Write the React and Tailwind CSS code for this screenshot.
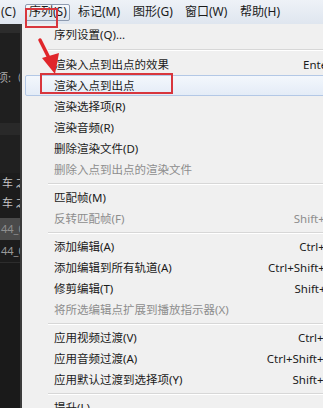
import React from "react";

const font = {
  fontFamily: "'Noto Sans', 'Noto Sans CJK SC', sans-serif",
};

const items = [
  { label: "序列设置(Q)..." },
  { sep: "h-[9px]" },
  { label: "渲染入点到出点的效果", key: "Enter" },
  { label: "渲染入点到出点", active: true },
  { label: "渲染选择项(R)" },
  { label: "渲染音频(R)" },
  { label: "删除渲染文件(D)" },
  { label: "删除入点到出点的渲染文件", off: true },
  { sep: "h-[7px]" },
  { label: "匹配帧(M)", key: "F" },
  { label: "反转匹配帧(F)", key: "Shift+R", off: true },
  { sep: "h-[7px]" },
  { label: "添加编辑(A)", key: "Ctrl+K" },
  { label: "添加编辑到所有轨道(A)", key: "Ctrl+Shift+K" },
  { label: "修剪编辑(T)", key: "Shift+T" },
  { label: "将所选编辑点扩展到播放指示器(X)", off: true },
  { sep: "h-[7px]" },
  { label: "应用视频过渡(V)", key: "Ctrl+D" },
  { label: "应用音频过渡(A)", key: "Ctrl+Shift+D" },
  { label: "应用默认过渡到选择项(Y)", key: "Shift+D" },
  { sep: "h-[7px]" },
  { label: "提升(L)", key: ";" },
];

function MenuRow({ item }) {
  if (item.sep) {
    return (
      <div className={`${item.sep} flex flex-col justify-center pl-[26px]`}>
        <div className="h-px bg-[#d7d7d7]" />
        <div className="h-px bg-white" />
      </div>
    );
  }
  const color = item.off ? "text-[#8d8d8d]" : "text-[#1b1b1b]";
  return (
    <div className="relative h-[21px]">
      {item.active && (
        <div className="absolute left-[3px] right-0 top-0 bottom-0 border border-[#b3c8e6] bg-gradient-to-b from-[#f3f7fc] to-[#e4ecf7] rounded-[2px]" />
      )}
      <div className={`relative flex h-full items-center pl-[32px] pr-[10px] ${color}`}>
        <span className="flex-1 whitespace-nowrap">{item.label}</span>
        {item.key && <span className="whitespace-nowrap">{item.key}</span>}
      </div>
      {item.active && (
        <div className="absolute left-[18px] top-[-2px] w-[133px] h-[21px] border-2 border-[#d8363d]" />
      )}
    </div>
  );
}

function DarkPanel() {
  return (
    <div className="flex w-[22px] shrink-0 text-[11px] text-[#a9a9a9] overflow-hidden">
      <div className="flex w-[20px] flex-col bg-[#1c1c1c]">
        <div className="h-[9px] shrink-0 bg-[#2c2c2c]" />
        <div className="h-[90px] shrink-0 bg-[#1f1f1f] pt-[37px]">
          <div className="ml-[-3px] whitespace-nowrap leading-[16px]">项:（</div>
        </div>
        <div className="h-[12px] shrink-0 bg-[#292929]" />
        <div className="h-[38px] shrink-0 bg-[#202020]" />
        <div className="h-[20px] shrink-0 flex items-center whitespace-nowrap pl-[2px] text-[#c4c4c4]">车 之</div>
        <div className="h-[20px] shrink-0 flex items-center whitespace-nowrap pl-[2px] text-[#c4c4c4]">车 之</div>
        <div className="h-[5px] shrink-0" />
        <div className="h-[22px] shrink-0 flex items-center bg-[#4a4a4a] whitespace-nowrap pl-[1px] text-[#8f8f8f]">44_0</div>
        <div className="h-[22px] shrink-0 flex items-center whitespace-nowrap pl-[1px] text-[#9a9a9a]">44_0</div>
        <div className="h-px shrink-0 bg-[#2d2d2d]" />
        <div className="flex-1 bg-[#1a1a1a]" />
      </div>
      <div className="w-[2px] bg-[#3b3b3b]" />
    </div>
  );
}

export default function App() {
  return (
    <div
      className="relative w-[323px] h-[408px] overflow-hidden bg-[#f0f0f0] flex flex-col"
      style={font}
    >
      <div className="h-[24px] shrink-0 flex items-center text-[12px] text-[#1b1b1b] bg-gradient-to-b from-[#eef2f7] to-[#dfe6ef]">
        <div className="w-[25px] pl-[1px]">(C)</div>
        <div className="w-[45px] h-[17px] flex items-center pl-[3px] border border-[#8e9bb0] rounded-[2px] bg-gradient-to-b from-[#f7f9fc] to-[#dce4ee] whitespace-nowrap">
          序列(S)
        </div>
        <div className="w-[63px] pl-[8px] whitespace-nowrap">标记(M)</div>
        <div className="w-[52px] whitespace-nowrap">图形(G)</div>
        <div className="w-[55px] whitespace-nowrap">窗口(W)</div>
        <div className="whitespace-nowrap">帮助(H)</div>
      </div>
      <div className="flex flex-1 min-h-0">
        <DarkPanel />
        <div className="w-[320px] shrink-0 bg-[#f0f0f0] text-[11.5px]">
          {items.map((it, i) => (
            <MenuRow key={i} item={it} />
          ))}
        </div>
      </div>
      <div className="absolute left-[25px] top-[8px] w-[33px] h-[20px] border-2 border-[#d8363d]" />
      <svg className="absolute left-0 top-0" width="80" height="90" viewBox="0 0 80 90">
        <line x1="40" y1="40" x2="50" y2="60" stroke="#e0262b" strokeWidth="3.5" strokeLinecap="round" />
        <polygon points="55,74 42,58 59,53" fill="#e0262b" />
      </svg>
    </div>
  );
}
